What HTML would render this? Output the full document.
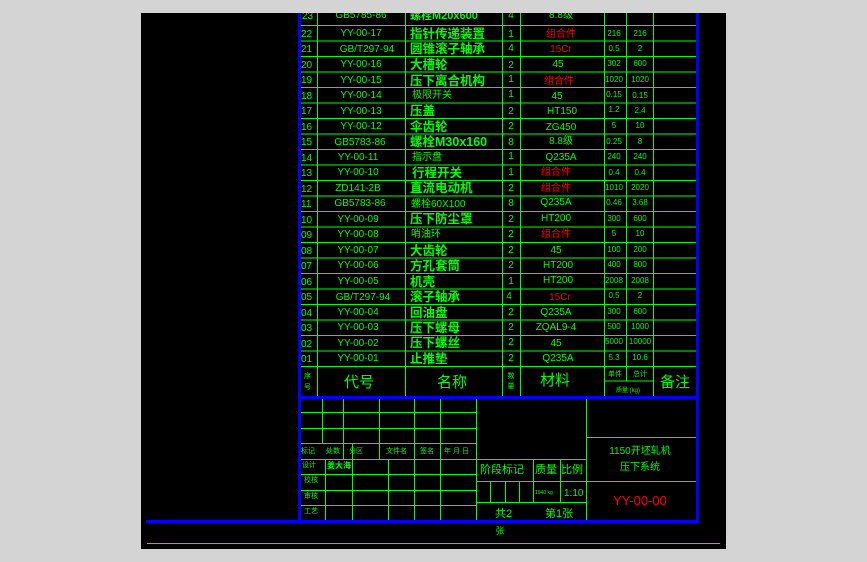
<!DOCTYPE html>
<html><head><meta charset="utf-8"><style>
html,body{margin:0;padding:0;background:#d4d4d4;width:867px;height:562px;overflow:hidden}
svg{position:absolute;left:0;top:0}
text{font-family:"Liberation Sans","Noto Sans CJK SC",sans-serif;fill:#00ff00}
.c{text-anchor:middle;font-size:10px}
.n{font-size:12.5px;font-weight:bold}
.r{fill:#ff0000}
.s{font-size:8px;text-anchor:middle}
</style></head><body>
<svg width="867" height="562" viewBox="0 0 867 562">
<rect x="141" y="13" width="585" height="536" fill="#000"/>
<g stroke="#00ff00" stroke-width="1" fill="none">
<path d="M300 25.5H697M300 41H697M300 56.5H697M300 72H697M300 87.5H697M300 103H697M300 118.5H697M300 134H697M300 149.5H697M300 165H697M300 180.5H697M300 196H697M300 211.5H697M300 227H697M300 242.5H697M300 258H697M300 273.5H697M300 289H697M300 304.5H697M300 320H697M300 335.5H697M300 351H697M300 366.5H697"/>
<path d="M317.5 13V396M405.5 13V396M502.5 13V396M520.5 13V396M604.5 13V396M626.5 13V381M653.5 13V396M604 381H653"/>
<path d="M300 412.5H476M300 428.5H476M300 443.5H476M300 459.5H476M300 474.5H476M300 490.5H476M300 505.5H476"/>
<path d="M322.5 398V443M343.5 398V459M379.5 398V459M414.5 398V520M440.5 398V520M476.5 398V520M586.5 398V520"/>
<path d="M325.5 459V520M352.5 443V520M388.5 459V520"/>
<path d="M476 459.5H586M476 481.5H586M476 502.5H586M533.5 459V502M560.5 459V502M490.5 481V502M505.5 481V502M519.5 481V502"/>
<path d="M586 437.5H697M586 481.5H697"/>
<path d="M147 543.5H720"/>
</g>
<g fill="#0000ff">
<rect x="298" y="13" width="3" height="510"/>
<rect x="696" y="13" width="3" height="510"/>
<rect x="298" y="396" width="401" height="3"/>
<rect x="146" y="520" width="553" height="3"/>
</g>
<g>
<text x="302" y="19" font-size="10">23</text><text x="361" y="18" class="c">GB5785-86</text><text x="410" y="19" class="n" style="font-size:11px">螺栓M20x600</text><text x="511" y="18" class="c">4</text><text x="561" y="18" class="c">8.8级</text>
</g>
<g>
<text x="301" y="37" font-size="10">22</text><text x="361" y="36" class="c">YY-00-17</text><text x="410" y="38" class="n">指针传递装置</text><text x="511" y="37" class="c">1</text><text x="561" y="37" class="c r" font-size="11">组合件</text><text x="614" y="36" class="s">216</text><text x="640" y="36" class="s">216</text>
<text x="301" y="52" font-size="10">21</text><text x="367" y="52" class="c">GB/T297-94</text><text x="410" y="53" class="n">圆锥滚子轴承</text><text x="511" y="51" class="c">4</text><text x="561" y="52" class="c r" font-size="12">15Cr</text><text x="614" y="51" class="s">0.5</text><text x="640" y="51" class="s">2</text>
<text x="301" y="68" font-size="10">20</text><text x="361" y="67" class="c">YY-00-16</text><text x="410" y="69" class="n">大槽轮</text><text x="511" y="68" class="c">2</text><text x="558" y="67" class="c">45</text><text x="614" y="66" class="s">302</text><text x="640" y="66" class="s">600</text>
<text x="301" y="83" font-size="10">19</text><text x="361" y="83" class="c">YY-00-15</text><text x="410" y="85" class="n">压下离合机构</text><text x="511" y="82" class="c">1</text><text x="559" y="84" class="c r" font-size="11">组合件</text><text x="614" y="82" class="s" font-size="7">1020</text><text x="640" y="82" class="s">1020</text>
<text x="301" y="99" font-size="10">18</text><text x="361" y="98" class="c">YY-00-14</text><text x="412" y="98" font-size="10">极限开关</text><text x="511" y="97" class="c">1</text><text x="557" y="99" class="c">45</text><text x="614" y="97" class="s">0.15</text><text x="640" y="98" class="s">0.15</text>
<text x="301" y="114" font-size="10">17</text><text x="361" y="114" class="c">YY-00-13</text><text x="410" y="115" class="n">压盖</text><text x="511" y="114" class="c">2</text><text x="562" y="114" class="c">HT150</text><text x="614" y="112" class="s">1.2</text><text x="640" y="113" class="s">2.4</text>
<text x="301" y="130" font-size="10">16</text><text x="361" y="129" class="c">YY-00-12</text><text x="410" y="131" class="n">伞齿轮</text><text x="511" y="129" class="c">2</text><text x="561" y="130" class="c">ZG450</text><text x="614" y="128" class="s">5</text><text x="640" y="128" class="s">10</text>
<text x="301" y="145" font-size="10">15</text><text x="360" y="145" class="c">GB5783-86</text><text x="410" y="146" class="n">螺栓M30x160</text><text x="511" y="145" class="c">8</text><text x="561" y="144" class="c">8.8级</text><text x="614" y="144" class="s">0.25</text><text x="640" y="144" class="s">8</text>
<text x="301" y="161" font-size="10">14</text><text x="358" y="160" class="c">YY-00-11</text><text x="412" y="160" font-size="10">指示盘</text><text x="511" y="159" class="c">1</text><text x="561" y="160" class="c">Q235A</text><text x="614" y="159" class="s">240</text><text x="640" y="159" class="s">240</text>
<text x="301" y="176" font-size="10">13</text><text x="358" y="175" class="c">YY-00-10</text><text x="412" y="177" class="n">行程开关</text><text x="511" y="175" class="c">1</text><text x="556" y="175" class="c r" font-size="11">组合件</text><text x="614" y="175" class="s">0.4</text><text x="640" y="175" class="s">0.4</text>
<text x="301" y="192" font-size="10">12</text><text x="358" y="191" class="c">ZD141-2B</text><text x="410" y="192" class="n">直流电动机</text><text x="511" y="191" class="c">2</text><text x="556" y="191" class="c r" font-size="11">组合件</text><text x="614" y="190" class="s" font-size="7">1010</text><text x="640" y="190" class="s" font-size="7">2020</text>
<text x="301" y="207" font-size="10">11</text><text x="360" y="206" class="c">GB5783-86</text><text x="411" y="207" font-size="10">螺栓60X100</text><text x="511" y="206" class="c">8</text><text x="556" y="205" class="c">Q235A</text><text x="614" y="205" class="s">0.46</text><text x="640" y="205" class="s">3.68</text>
<text x="301" y="223" font-size="10">10</text><text x="358" y="222" class="c">YY-00-09</text><text x="410" y="223" class="n">压下防尘罩</text><text x="511" y="222" class="c">2</text><text x="556" y="221" class="c">HT200</text><text x="614" y="221" class="s">300</text><text x="640" y="221" class="s">600</text>
<text x="301" y="238" font-size="10">09</text><text x="358" y="237" class="c">YY-00-08</text><text x="411" y="237" font-size="10">哨油环</text><text x="511" y="237" class="c">2</text><text x="556" y="237" class="c r" font-size="11">组合件</text><text x="614" y="236" class="s">5</text><text x="640" y="236" class="s">10</text>
<text x="301" y="254" font-size="10">08</text><text x="358" y="253" class="c">YY-00-07</text><text x="410" y="255" class="n">大齿轮</text><text x="511" y="253" class="c">2</text><text x="556" y="253" class="c">45</text><text x="614" y="252" class="s">100</text><text x="640" y="252" class="s">200</text>
<text x="301" y="269" font-size="10">07</text><text x="358" y="268" class="c">YY-00-06</text><text x="410" y="270" class="n">方孔套筒</text><text x="511" y="268" class="c">2</text><text x="558" y="268" class="c">HT200</text><text x="614" y="267" class="s">400</text><text x="640" y="267" class="s">800</text>
<text x="301" y="285" font-size="10">06</text><text x="358" y="284" class="c">YY-00-05</text><text x="410" y="286" class="n">机壳</text><text x="511" y="284" class="c">1</text><text x="558" y="283" class="c">HT200</text><text x="614" y="283" class="s" font-size="7">2008</text><text x="640" y="283" class="s" font-size="7">2008</text>
<text x="301" y="300" font-size="10">05</text><text x="363" y="300" class="c">GB/T297-94</text><text x="410" y="301" class="n">滚子轴承</text><text x="509" y="299" class="c">4</text><text x="560" y="300" class="c r" font-size="12">15Cr</text><text x="614" y="298" class="s">0.5</text><text x="640" y="298" class="s">2</text>
<text x="301" y="316" font-size="10">04</text><text x="358" y="315" class="c">YY-00-04</text><text x="410" y="317" class="n">回油盘</text><text x="511" y="315" class="c">2</text><text x="556" y="315" class="c">Q235A</text><text x="614" y="314" class="s">300</text><text x="640" y="314" class="s">600</text>
<text x="301" y="331" font-size="10">03</text><text x="358" y="330" class="c">YY-00-03</text><text x="410" y="332" class="n">压下螺母</text><text x="511" y="330" class="c">2</text><text x="556" y="330" class="c">ZQAL9-4</text><text x="614" y="329" class="s">500</text><text x="640" y="329" class="s">1000</text>
<text x="301" y="347" font-size="10">02</text><text x="358" y="346" class="c">YY-00-02</text><text x="410" y="347" class="n">压下螺丝</text><text x="511" y="345" class="c">2</text><text x="556" y="346" class="c">45</text><text x="614" y="344" class="s" font-size="6">5000</text><text x="640" y="344" class="s" font-size="6">10000</text>
<text x="301" y="362" font-size="10">01</text><text x="358" y="361" class="c">YY-00-01</text><text x="410" y="363" class="n">止推垫</text><text x="511" y="361" class="c">2</text><text x="558" y="361" class="c">Q235A</text><text x="614" y="360" class="s">5.3</text><text x="640" y="360" class="s">10.6</text>
</g>
<g>
<text x="304" y="378" font-size="7">序</text><text x="304" y="389" font-size="7">号</text>
<text x="359" y="387" font-size="15" text-anchor="middle">代号</text>
<text x="452" y="387" font-size="15" text-anchor="middle">名称</text>
<text x="511" y="378" font-size="7" text-anchor="middle">数</text><text x="511" y="388" font-size="7" text-anchor="middle">量</text>
<text x="555" y="385" font-size="15" text-anchor="middle">材料</text>
<text x="615" y="376" font-size="7" text-anchor="middle">单件</text><text x="640" y="376" font-size="7" text-anchor="middle">总计</text>
<text x="628" y="392" font-size="6" text-anchor="middle">质量 (kg)</text>
<text x="675" y="387" font-size="15" text-anchor="middle">备注</text>
<text x="301" y="453" font-size="7">标记</text><text x="326" y="453" font-size="7">处数</text><text x="349" y="453" font-size="7">分区</text><text x="386" y="453" font-size="7">文件名</text><text x="420" y="453" font-size="7">签名</text><text x="444" y="453" font-size="7">年 月 日</text>
<text x="302" y="467" font-size="7">设计</text><text x="327" y="468" font-size="8" font-weight="bold">姜大海</text>
<text x="304" y="482" font-size="7">校核</text><text x="304" y="498" font-size="7">审核</text><text x="304" y="513" font-size="7">工艺</text>
<text x="480" y="473" font-size="11">阶段标记</text><text x="535" y="473" font-size="11">质量</text><text x="561" y="473" font-size="11">比例</text>
<text x="535" y="494" font-size="5">1940 kg</text><text x="564" y="496" font-size="10">1:10</text>
<text x="495" y="517" font-size="11">共2</text><text x="545" y="517" font-size="11">第1张</text>
<text x="640" y="454" font-size="10" text-anchor="middle">1150开坯轧机</text>
<text x="640" y="470" font-size="10" text-anchor="middle">压下系统</text>
<text x="640" y="505" font-size="13" text-anchor="middle" class="r">YY-00-00</text>
<text x="500" y="534" font-size="9" text-anchor="middle">张</text>
</g>
<rect x="0" y="0" width="867" height="13" fill="#d4d4d4"/>
</svg>
</body></html>
